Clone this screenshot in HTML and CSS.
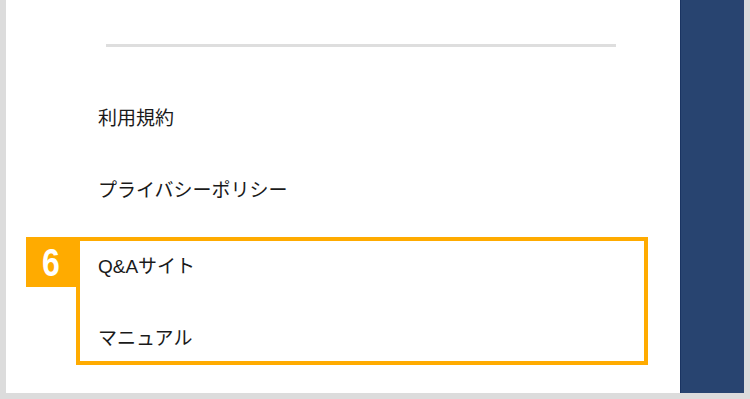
FILE: index.html
```html
<!DOCTYPE html>
<html lang="ja">
<head>
  <meta charset="utf-8">
  <title>メニュー</title>
  <link rel="stylesheet" href="styles.css">
</head>
<body>
  <div class="screen">
    <div class="drawer">
      <div class="divider"></div>

      <ul class="menu">
        <li class="menu-item">利用規約</li>
        <li class="menu-item">プライバシーポリシー</li>
      </ul>

      <!-- highlighted group -->
      <div class="callout">
        <span class="badge"><span class="badge-num">6</span></span>
        <ul class="menu">
          <li class="menu-item">Q&amp;Aサイト</li>
          <li class="menu-item">マニュアル</li>
        </ul>
      </div>
    </div>

    <div class="side"></div>
  </div>
</body>
</html>
```

FILE: styles.css
```css
* { box-sizing: border-box; }

html, body {
  margin: 0;
  padding: 0;
}

body {
  width: 750px;
  height: 399px;
  background: #dcdcdc;
  font-family: "Liberation Sans", "Noto Sans CJK JP", sans-serif;
  color: #1a1a1a;
  overflow: hidden;
}

.screen {
  display: flex;
  height: 393px;
  margin: 0 6px;
}

.drawer {
  flex: 1;
  background: #ffffff;
  padding: 44px 32px 0 70px;
}

.side {
  width: 64px;
  background: #284470;
  border-left: 1px solid #1a3462;
}

.divider {
  height: 3px;
  background: #dedede;
  margin: 0 32px 0 30px;
}

.menu {
  list-style: none;
  margin: 0;
  padding: 0;
  display: flex;
  flex-direction: column;
  gap: 24px;
}

.drawer > .menu {
  margin-top: 46px;
  padding-left: 22px;
}

.menu-item {
  height: 48px;
  padding-top: 3px;
  line-height: 45px;
  font-size: 19px;
  white-space: nowrap;
}

.callout {
  position: relative;
  margin-top: 24px;
  border: 4px solid #ffab00;
  padding-left: 18px;
}

.badge {
  position: absolute;
  left: -54px;
  top: -4px;
  width: 50px;
  height: 50px;
  background: #ffab00;
  color: #ffffff;
  font-family: "Liberation Sans", sans-serif;
  font-weight: bold;
  font-size: 39px;
  line-height: 52px;
  text-align: center;
}

.badge-num {
  display: inline-block;
  transform: scaleX(0.82);
}
```
